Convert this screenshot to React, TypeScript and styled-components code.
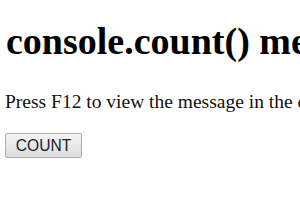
import React from "react";
import styled, { createGlobalStyle } from "styled-components";

const Global = createGlobalStyle`
  html, body { margin: 0; padding: 0; background: #ffffff; }
  body { overflow: hidden; }
`;

const Page = styled.div`
  width: 300px;
  height: 210px;
  overflow: hidden;
  padding: 0 0 0 5px;
  box-sizing: border-box;
  font-family: "Liberation Serif", "Times New Roman", serif;
  color: #000;
  display: flex;
  flex-direction: column;
  align-items: flex-start;
`;

const Title = styled.h1`
  margin: 20px 0 0 1px;
  font-size: 38px;
  line-height: 43px;
  font-weight: bold;
  white-space: nowrap;
`;

const Text = styled.p`
  margin: 28px 0 0 0;
  font-size: 19.5px;
  line-height: 22px;
  white-space: nowrap;
  color: #111;
`;

const Button = styled.button`
  margin: 20px 0 0 0;
  width: 77px;
  height: 25px;
  padding: 0;
  border: 1px solid #acacac;
  border-radius: 2px;
  background: linear-gradient(#f4f4f4, #dcdcdc);
  font-family: "Liberation Sans", Arial, sans-serif;
  font-size: 15.6px;
  color: #222;
  line-height: 23px;
`;

export default function App() {
  return (
    <>
      <Global />
      <Page>
        <Title>console.count() method</Title>
        <Text>Press F12 to view the message in the console.</Text>
        <Button>COUNT</Button>
      </Page>
    </>
  );
}
